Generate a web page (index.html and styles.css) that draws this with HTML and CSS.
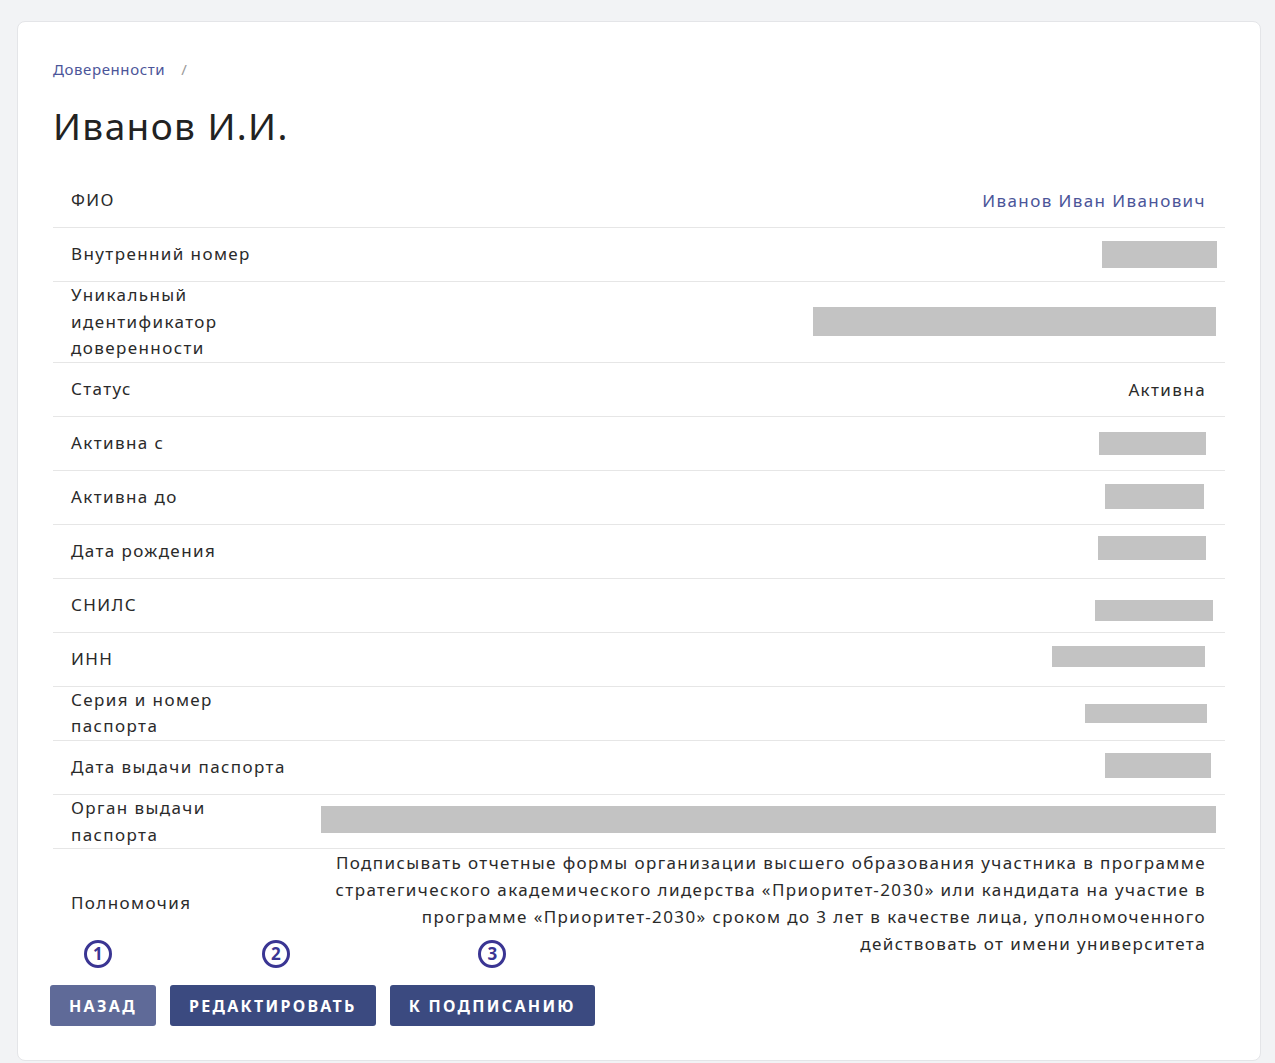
FILE: index.html
```html
<!DOCTYPE html>
<html lang="ru">
<head>
<meta charset="utf-8">
<title>Иванов И.И.</title>
<link rel="stylesheet" href="styles.css">
</head>
<body>
<main class="card">
  <nav class="crumbs"><a class="crumb-link" href="#">Доверенности</a><span class="crumb-sep">/</span></nav>
  <h1 class="title">Иванов И.И.</h1>
  <div class="table">
    <div class="row"><div class="label">ФИО</div><div class="value"><a class="link" href="#">Иванов Иван Иванович</a></div></div>
    <div class="row"><div class="label">Внутренний номер</div><div class="value"><span class="mask" style="--w:115px;--h:27px;--dx:11px;--dy:0px"></span></div></div>
    <div class="row"><div class="label">Уникальный идентификатор доверенности</div><div class="value"><span class="mask" style="--w:403px;--h:29px;--dx:10px;--dy:0px"></span></div></div>
    <div class="row"><div class="label">Статус</div><div class="value">Активна</div></div>
    <div class="row"><div class="label">Активна с</div><div class="value"><span class="mask" style="--w:107px;--h:23px;--dx:0px;--dy:0px"></span></div></div>
    <div class="row"><div class="label">Активна до</div><div class="value"><span class="mask" style="--w:99px;--h:25px;--dx:-2px;--dy:-1px"></span></div></div>
    <div class="row"><div class="label">Дата рождения</div><div class="value"><span class="mask" style="--w:108px;--h:24px;--dx:0px;--dy:-3px"></span></div></div>
    <div class="row"><div class="label">СНИЛС</div><div class="value"><span class="mask" style="--w:118px;--h:21px;--dx:7px;--dy:5px"></span></div></div>
    <div class="row"><div class="label">ИНН</div><div class="value"><span class="mask" style="--w:153px;--h:21px;--dx:-1px;--dy:-3px"></span></div></div>
    <div class="row"><div class="label">Серия и номер паспорта</div><div class="value"><span class="mask" style="--w:122px;--h:19px;--dx:1px;--dy:0px"></span></div></div>
    <div class="row"><div class="label">Дата выдачи паспорта</div><div class="value"><span class="mask" style="--w:106px;--h:25px;--dx:5px;--dy:-2px"></span></div></div>
    <div class="row"><div class="label">Орган выдачи паспорта</div><div class="value"><span class="mask" style="--w:895px;--h:27px;--dx:10px;--dy:-2px"></span></div></div>
    <div class="row row-last"><div class="label">Полномочия</div><div class="value">Подписывать отчетные формы организации высшего образования участника в программе стратегического академического лидерства «Приоритет-2030» или кандидата на участие в программе «Приоритет-2030» сроком до 3 лет в качестве лица, уполномоченного действовать от имени университета</div></div>
  </div>
  <div class="actions">
    <button class="btn btn-muted" type="button">Назад<span class="mark mark-1">1</span></button>
    <button class="btn" type="button">Редактировать<span class="mark mark-2">2</span></button>
    <button class="btn" type="button">К подписанию<span class="mark mark-3">3</span></button>
  </div>
</main>
</body>
</html>
```
FILE: styles.css
```css
* { box-sizing: border-box; }
html, body { margin: 0; }
body {
  background: #f2f3f5;
  padding: 21px 14px 2px 17px;
  font-family: "Noto Sans", "Open Sans", sans-serif;
  color: #2a2a2a;
}
.card {
  background: #fff;
  border: 1px solid #e4e5e8;
  border-radius: 8px;
  min-height: 1040px;
  padding: 32px 35px 33px 35px;
}
.crumbs {
  display: flex;
  align-items: center;
  gap: 16px;
  font-size: 15px;
  line-height: 30px;
  letter-spacing: 0.6px;
}
.crumb-link { color: #4b5599; text-decoration: none; }
.crumb-sep { color: #9a9a9a; }
.title {
  margin: 15px 0 0 0;
  font-size: 37px;
  font-weight: 400;
  line-height: 54px;
  letter-spacing: 1.4px;
  color: #222;
}
.table {
  margin-top: 21px;
}
.row {
  display: flex;
  align-items: center;
  min-height: 54px;
  border-bottom: 1px solid #e6e6e6;
  font-size: 17px;
  line-height: 27px;
  letter-spacing: 1.4px;
}
.row-last { border-bottom: 0; }
.label {
  flex: 0 0 250px;
  padding: 0 14px 0 18px;
  line-height: 26.6px;
}
.value {
  flex: 1;
  padding: 0 19px 0 18px;
  text-align: right;
  display: flex;
  justify-content: flex-end;
}
.row-last .value { display: block; padding-left: 24px; }
.link { color: #4b5599; text-decoration: none; }
.mask {
  display: block;
  width: var(--w);
  height: var(--h);
  background: #c3c3c3;
  margin-right: calc(-1 * var(--dx));
  transform: translateY(var(--dy));
}
.actions {
  display: flex;
  gap: 14px;
  margin-top: 28px;
  margin-left: -3px;
}
.btn {
  position: relative;
  height: 41px;
  padding: 0 19px;
  border: 0;
  border-radius: 3px;
  background: #3b4a80;
  color: #fff;
  font-family: "Noto Sans", "Open Sans", sans-serif;
  font-size: 16px;
  font-weight: 700;
  letter-spacing: 2.3px;
  text-transform: uppercase;
}
.btn-muted { background: #5f6a98; }
.mark {
  position: absolute;
  left: 50%;
  top: -45px;
  width: 28px;
  height: 28px;
  margin-left: -14px;
  border: 3px solid #3a3593;
  border-radius: 50%;
  color: #3a3593;
  font-size: 17px;
  font-weight: 700;
  line-height: 22px;
  letter-spacing: 0;
  text-align: center;
}
.mark-1 { margin-left: -19px; }
.mark-2 { margin-left: -11px; }
.mark-3 { margin-left: -14px; }
```
